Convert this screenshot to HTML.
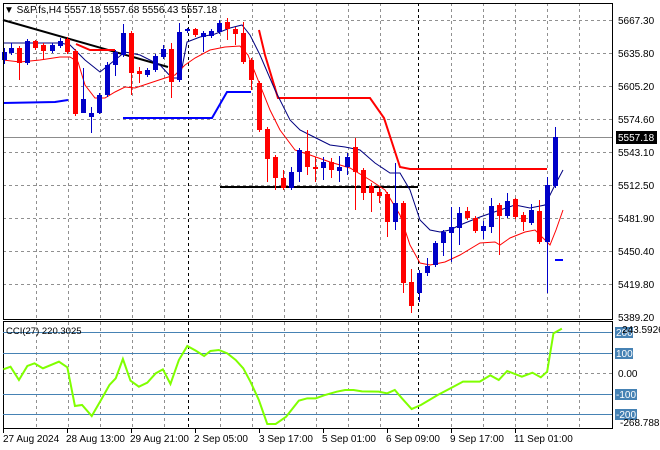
<!DOCTYPE html>
<html><head><meta charset="utf-8"><style>
body{margin:0;width:660px;height:450px;background:#fff;overflow:hidden;font-family:"Liberation Sans",sans-serif;}
svg{position:absolute;left:0;top:0}
text{font-family:"Liberation Sans",sans-serif;font-size:10px;fill:#000}
</style></head><body>
<svg width="660" height="450" viewBox="0 0 660 450">
<g stroke="#909090" stroke-dasharray="3,3" stroke-width="1">
<line x1="3" x2="612" y1="20.5" y2="20.5"/><line x1="3" x2="612" y1="53.5" y2="53.5"/><line x1="3" x2="612" y1="86.5" y2="86.5"/><line x1="3" x2="612" y1="119.5" y2="119.5"/><line x1="3" x2="612" y1="152.5" y2="152.5"/><line x1="3" x2="612" y1="185.5" y2="185.5"/><line x1="3" x2="612" y1="218.5" y2="218.5"/><line x1="3" x2="612" y1="251.5" y2="251.5"/><line x1="3" x2="612" y1="284.5" y2="284.5"/>
<line x1="3" x2="612" y1="373.5" y2="373.5"/>
</g>
<g stroke="#909090" stroke-dasharray="3,3">
<path d="M36.5 3V319M68.5 3V319M100.5 3V319M132.5 3V319M164.5 3V319M220.5 3V319M252.5 3V319M284.5 3V319M316.5 3V319M348.5 3V319M380.5 3V319M451.5 3V319M483.5 3V319M515.5 3V319M547.5 3V319M579.5 3V319"/>
<path d="M36.5 322V428M68.5 322V428M100.5 322V428M132.5 322V428M164.5 322V428M220.5 322V428M252.5 322V428M284.5 322V428M316.5 322V428M348.5 322V428M380.5 322V428M451.5 322V428M483.5 322V428M515.5 322V428M547.5 322V428M579.5 322V428"/>
</g>
<g stroke="#000" stroke-dasharray="3,3"><path d="M188.5 3V319M418.5 3V319M188.5 322V428M418.5 322V428"/></g>
<line x1="3" x2="612" y1="137.5" y2="137.5" stroke="#8c8c8c"/>
<line x1="3" y1="20" x2="168" y2="67" stroke="#000" stroke-width="2"/>
<line x1="220" y1="187" x2="418" y2="187" stroke="#000" stroke-width="2"/>
<polyline fill="none" stroke="#0000ff" stroke-width="2" points="3,103 55,102 68,100"/>
<polyline fill="none" stroke="#0000ff" stroke-width="2" points="123,118 212,118 227,92 251,92"/>
<line x1="555" y1="260" x2="563" y2="260" stroke="#0000ff" stroke-width="2"/>
<polyline fill="none" stroke="#ff0000" stroke-width="2" points="76,44 90,50 115,50"/>
<polyline fill="none" stroke="#ff0000" stroke-width="2" points="259,30 265,55 278,98 370,98 384,118 400,167 410,169 547,169"/>
<polyline fill="none" stroke="#000080" stroke-width="1" points="3,43 25,43 45,43 60,43 70,45 85,60 100,72 115,60 125,52 140,55 160,65 172,78 180,78 187,42 200,37 215,34 230,28 242,25 250,35 260,55 275,90 290,120 300,130 310,135 320,140 330,145 345,147 360,150 375,163 390,173 400,173 410,190 420,220 430,230 440,232 450,230 460,225 480,217 500,210 515,205 530,208 545,205 555,185 563,170"/>
<polyline fill="none" stroke="#ff0000" stroke-width="1" points="3,60 20,62 40,60 60,57 70,57 78,62 85,85 95,98 105,98 115,92 125,87 135,88 150,83 165,78 175,75 185,65 195,58 210,50 225,47 240,46 248,55 258,80 270,110 280,130 295,150 310,155 330,162 350,168 370,180 385,190 400,215 410,245 420,263 430,265 445,262 460,255 480,243 495,242 500,245 510,238 525,232 535,230 545,240 550,245 556,230 563,210"/>
<g id="cs"></g>
<rect x="3.5" y="3.5" width="609" height="316" fill="none" stroke="#000"/>
<rect x="3.5" y="321.5" width="609" height="107" fill="none" stroke="#000"/>
<g>
<text x="618" y="24">5667.30</text><text x="618" y="57">5635.80</text><text x="618" y="90">5605.20</text><text x="618" y="123">5574.60</text><text x="618" y="156">5543.10</text><text x="618" y="189">5512.50</text><text x="618" y="222">5481.90</text><text x="618" y="255">5450.40</text><text x="618" y="288">5419.80</text><text x="618" y="321">5389.20</text>
</g>
<rect x="616" y="131" width="41" height="13" fill="#000"/>
<text x="618" y="141" style="fill:#fff">5557.18</text>
<text x="4" y="13">▼ S&amp;P.fs,H4  5557.18 5557.68 5556.43 5557.18</text>
<g stroke="#4682b4"><path d="M3 332.5H612M3 353.5H612M3 394.5H612M3 414.5H612"/></g>
<g fill="#4682b4"><rect x="615" y="327" width="18" height="11"/><rect x="615" y="348" width="18" height="11"/><rect x="615" y="389" width="22" height="11"/><rect x="615" y="409" width="22" height="11"/></g>
<g style="font-size:9.5px"><text x="616" y="336" style="fill:#fff">200</text><text x="616" y="357" style="fill:#fff">100</text><text x="616" y="398" style="fill:#fff">-100</text><text x="616" y="418" style="fill:#fff">-200</text>
<text x="618" y="377">0.00</text><text x="622" y="333">243.5926</text><text x="620" y="426">-268.7888</text></g>
<text x="6" y="334" style="font-size:9.5px">CCI(27) 220.3025</text>
<g transform="scale(0.42088,0.33333) translate(0,930)">
<polyline fill="none" stroke="#7fff00" stroke-width="2" vector-effect="non-scaling-stroke" points="8,178 25,170 45,210 65,168 82,160 102,175 140,155 160,172 178,288 195,285 218,318 240,270 260,225 275,205 292,147 310,212 330,230 350,218 370,190 387,178 405,222 425,150 445,108 465,122 485,138 500,123 520,120 540,130 560,150 578,175 595,215 615,270 635,342 655,342 680,320 710,272 730,265 750,265 770,256 800,245 820,240 840,240 860,244 900,245 920,250 938,240 955,265 978,297 1000,285 1040,255 1070,235 1100,215 1140,215 1165,196 1185,210 1205,183 1240,200 1265,188 1285,202 1300,185 1315,70 1335,56"/>
</g>
<g stroke="#000"><path d="M3.5 429V433M67.5 429V433M131.5 429V433M195.5 429V433M259.5 429V433M323.5 429V433M387.5 429V433M451.5 429V433M515.5 429V433"/></g>
<g style="font-size:9.5px"><text x="3" y="442">27 Aug 2024</text><text x="66" y="442">28 Aug 13:00</text><text x="130" y="442">29 Aug 21:00</text><text x="194" y="442">2 Sep 05:00</text><text x="259" y="442">3 Sep 17:00</text><text x="322" y="442">5 Sep 01:00</text><text x="386" y="442">6 Sep 09:00</text><text x="450" y="442">9 Sep 17:00</text><text x="514" y="442">11 Sep 01:00</text></g>
</svg>
<script>
var d=[
[4,'b',52,60,48,64],[11,'b',48,53,43,55],[19,'r',48,63,46,80],[27,'b',41,63,39,65],[35,'r',41,48,40,50],[43,'r',45,51,43,60],[52,'b',45,51,43,53],[60,'b',41,46,38,48],[67,'r',39,52,37,54],
[75,'r',51,114,49,116],[83,'b',99,113,68,113],[91,'b',113,117,107,133],[99,'b',95,113,93,114],[107,'b',65,95,62,97],[115,'b',52,65,50,76],[123,'b',33,55,24,57],[131,'r',33,73,31,95],[139,'r',71,74,67,83],[147,'b',70,75,68,77],[155,'b',56,70,54,72],[163,'b',49,57,45,59],[171,'r',49,82,43,98],[179,'b',32,80,23,82],[187,'b',29,31,28,33],[195,'r',29,35,28,37],[203,'b',33,37,31,52],[211,'b',31,36,29,38],[219,'b',23,32,20,34],[227,'r',22,29,18,40],[235,'r',29,34,27,45],[243,'r',33,62,22,64],[251,'r',60,80,58,90],[259,'r',83,130,81,132],
[267,'r',129,159,127,182],[275,'r',157,178,155,190],[283,'r',178,188,170,190],[291,'b',172,188,167,190],[299,'b',150,172,148,182],[307,'r',151,167,130,175],[315,'r',167,169,157,182],[323,'b',162,168,157,180],[331,'r',162,170,158,178],[339,'b',167,171,156,182],[347,'b',157,167,153,175],[355,'r',147,172,138,210],[363,'r',170,193,168,200],[371,'r',186,193,183,212],[379,'r',192,196,188,203],[387,'r',194,222,192,237],[395,'b',203,222,163,230],[403,'r',203,283,201,293],[411,'r',282,306,269,313],[419,'b',273,293,270,302],[427,'b',266,273,258,276],[435,'b',243,265,241,267],[443,'b',232,243,230,256],[451,'b',227,233,207,262],[459,'b',213,228,207,245],[467,'r',211,218,207,220],[475,'r',218,231,216,233],[483,'b',226,231,221,239],[491,'b',206,227,198,233],[499,'r',205,216,203,255],[507,'b',201,216,193,218],[515,'r',199,217,198,219],[523,'r',215,222,212,231],[531,'b',210,223,204,225],[539,'r',211,242,200,244],[547,'b',185,242,177,293],[555,'b',137,186,127,188]];
var s='';d.forEach(function(c){var col=c[1]=='r'?'#ff0000':'#0000c8';s+='<rect x="'+c[0]+'" y="'+c[4]+'" width="1" height="'+(c[5]-c[4])+'" fill="'+col+'"/><rect x="'+(c[0]-2)+'" y="'+c[2]+'" width="5" height="'+Math.max(1,c[3]-c[2])+'" fill="'+col+'"/>';});
document.getElementById('cs').innerHTML=s;
</script>
</body></html>
